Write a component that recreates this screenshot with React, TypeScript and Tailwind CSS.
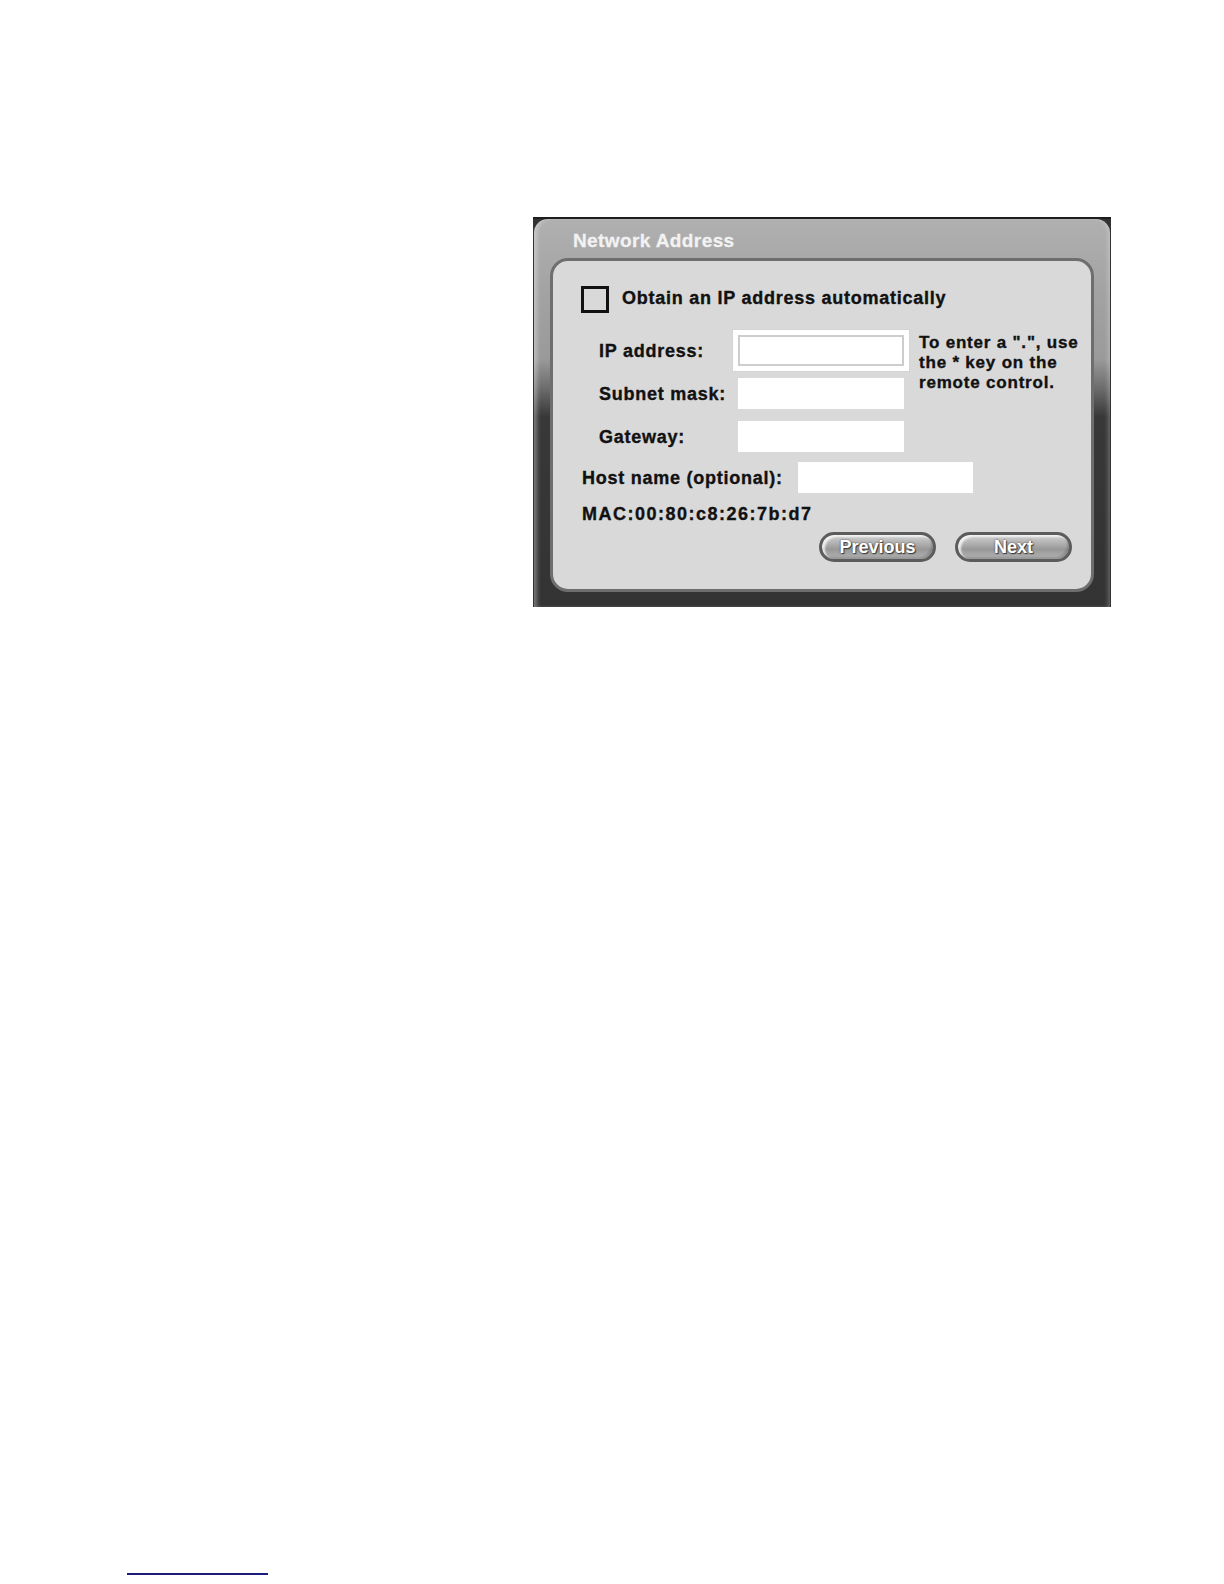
const font = { fontFamily: '"Liberation Sans", Arial, sans-serif' }

function Field({ className = '' }: { className?: string }) {
  return <div className={`h-[31px] bg-white ${className}`} />
}

function PillButton({ label }: { label: string }) {
  return (
    <button
      type="button"
      className="flex h-[30px] w-[117px] items-center justify-center rounded-full border-[3px] border-[#5c5c5c] bg-[linear-gradient(to_bottom,#d2d2d2_0%,#b0b0b0_35%,#989898_60%,#b4b4b4_100%)] text-[18px] font-bold leading-none text-white shadow-[inset_3px_2px_2px_rgba(255,255,255,0.75),inset_-2px_-2px_2px_rgba(0,0,0,0.15)] [text-shadow:0_0_2px_#3a3a3a,1px_1px_1px_#3a3a3a]"
    >
      {label}
    </button>
  )
}

export default function App() {
  return (
    <div className="flex min-h-[1584px] flex-col bg-white" style={font}>
      {/* dialog */}
      <div className="ml-[533px] mt-[217px] h-[390px] w-[578px] border-t-2 border-[#1e1e1e] bg-[#333333] px-px">
        <div className="flex h-[388px] flex-col rounded-t-[14px] bg-[linear-gradient(to_bottom,#b0b0b0_0%,#a2a2a2_20%,#9a9a9a_36%,#6a6a6a_44%,#383838_51%,#333333_100%)] shadow-[inset_5px_0_4px_-2px_rgba(255,255,255,0.35),inset_-4px_0_4px_-2px_rgba(255,255,255,0.25)]">
          <div className="pl-[39px] pt-[11px] text-[19px] font-bold leading-[22px] tracking-[0.4px] text-[#f2f2f2] [-webkit-text-stroke:0.3px_#f2f2f2]">
            Network Address
          </div>

          <div className="ml-[16px] mt-[6px] flex h-[334px] w-[544px] flex-col rounded-[18px] border-[3px] border-[#6e6e6e] bg-[#d9d9d9] text-[18px] font-bold tracking-[0.75px] text-[#111] [-webkit-text-stroke:0.35px_#111]">
            {/* checkbox row */}
            <div className="mt-[25px] flex items-center pl-[28px]">
              <div className="h-[27px] w-[28px] border-[3px] border-[#111]" />
              <span className="ml-[13px] pb-[3px] leading-[22px]">Obtain an IP address automatically</span>
            </div>

            {/* address fields + hint */}
            <div className="mt-[22px] flex items-start">
              <div className="grid grid-cols-[139px_166px] gap-y-[12px] pl-[46px]">
                <span className="self-center leading-[22px]">IP address:</span>
                <Field className="border-2 border-[#cdcdcd] shadow-[0_0_0_5px_#ffffff,0_0_0_6px_#d4d4d4]" />
                <span className="self-center leading-[22px]">Subnet mask:</span>
                <Field />
                <span className="self-center leading-[22px]">Gateway:</span>
                <Field />
              </div>
              <div className="-mt-[2px] ml-[15px] flex flex-col whitespace-nowrap text-[17px] leading-[20px] tracking-[0.8px]">
                <span>To enter a &quot;.&quot;, use</span>
                <span>the * key on the</span>
                <span>remote control.</span>
              </div>
            </div>

            {/* host name */}
            <div className="mt-[10px] flex items-center pl-[29px]">
              <span className="w-[216px] leading-[22px]">Host name (optional):</span>
              <Field className="w-[175px]" />
            </div>

            <div className="mt-[10px] pl-[29px] leading-[22px] tracking-[1.5px]">MAC:00:80:c8:26:7b:d7</div>

            <div className="mt-[7px] flex justify-end gap-[19px] pr-[19px] tracking-normal [-webkit-text-stroke:0]">
              <PillButton label="Previous" />
              <PillButton label="Next" />
            </div>
          </div>
        </div>
      </div>

      {/* footnote rule */}
      <div className="ml-[127px] mt-[966px] h-[2px] w-[141px] bg-[#1b1b80]" />
    </div>
  )
}
